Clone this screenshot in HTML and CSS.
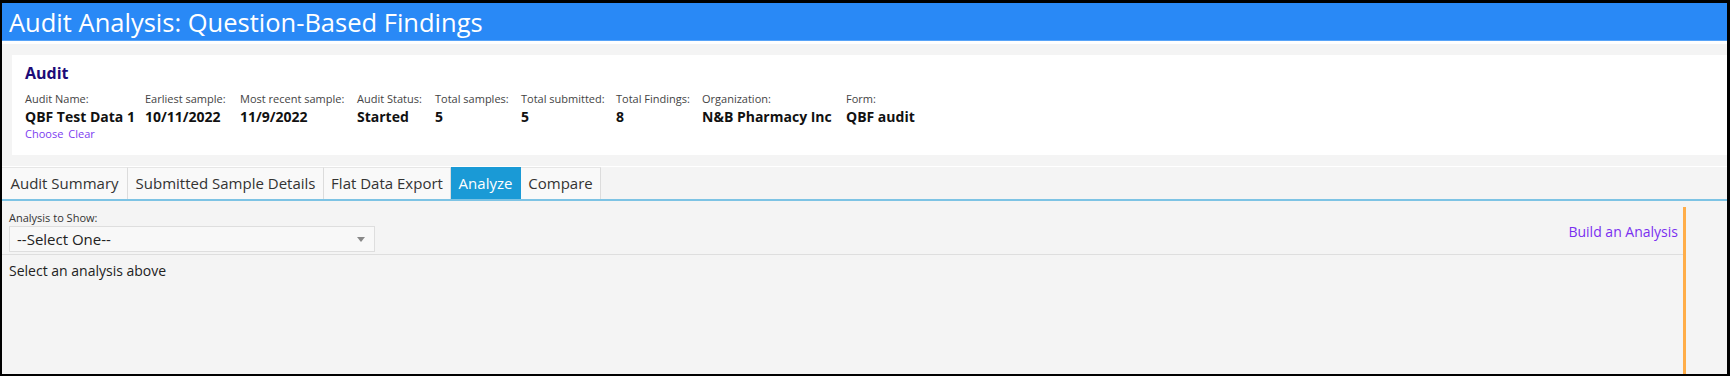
FILE: index.html
```html
<!DOCTYPE html>
<html lang="en">
<head>
<meta charset="utf-8">
<title>Audit Analysis: Question-Based Findings</title>
<link rel="stylesheet" href="styles.css">
</head>
<body>
<div class="frame">
  <header class="titlebar"><h1>Audit Analysis: Question-Based Findings</h1></header>
  <section class="audit-panel">
    <div class="audit-card">
      <h2>Audit</h2>
      <div class="fields">
        <div class="field">
          <span class="label">Audit Name:</span>
          <span class="value">QBF Test Data 1</span>
          <span class="links"><a href="#">Choose</a><a href="#">Clear</a></span>
        </div>
        <div class="field"><span class="label">Earliest sample:</span><span class="value">10/11/2022</span></div>
        <div class="field"><span class="label">Most recent sample:</span><span class="value">11/9/2022</span></div>
        <div class="field"><span class="label">Audit Status:</span><span class="value">Started</span></div>
        <div class="field"><span class="label">Total samples:</span><span class="value">5</span></div>
        <div class="field"><span class="label">Total submitted:</span><span class="value">5</span></div>
        <div class="field"><span class="label">Total Findings:</span><span class="value">8</span></div>
        <div class="field"><span class="label">Organization:</span><span class="value">N&amp;B Pharmacy Inc</span></div>
        <div class="field"><span class="label">Form:</span><span class="value">QBF audit</span></div>
      </div>
    </div>
  </section>
  <nav class="tabs">
    <a class="tab t1" href="#">Audit Summary</a>
    <a class="tab t2" href="#">Submitted Sample Details</a>
    <a class="tab t3" href="#">Flat Data Export</a>
    <a class="tab t4 active" href="#">Analyze</a>
    <a class="tab t5" href="#">Compare</a>
  </nav>
  <main class="content">
    <div class="analysis">
      <div class="toolbar">
        <div class="picker">
          <label class="picker-label">Analysis to Show:</label>
          <div class="select"><span>--Select One--</span><span class="arrow"></span></div>
        </div>
        <a class="build" href="#">Build an Analysis</a>
      </div>
      <p class="hint">Select an analysis above</p>
    </div>
  </main>
</div>
</body>
</html>
```

FILE: styles.css
```css
html {
  background: #000;
}
body {
  margin: 3px 3px 2px 2px;
  font-family: "Open Sans", "Noto Sans", sans-serif;
  color: #222;
}
a { text-decoration: none; }

.frame {
  height: 371px;
  background: #f4f4f4;
  display: flex;
  flex-direction: column;
  overflow: hidden;
}

.titlebar {
  height: 37px;
  background: #2989f6;
  border-bottom: 1px solid #57a3f8;
  padding-left: 7px;
  display: flex;
  align-items: center;
  flex-shrink: 0;
}
.titlebar h1 {
  margin: 0;
  font-weight: 400;
  font-size: 25.5px;
  color: #fff;
  letter-spacing: 0;
}

.audit-panel {
  border-top: 3px solid #fff;
  border-bottom: 1px solid #fff;
  padding: 11px 0 11px 10px;
  flex-shrink: 0;
}
.audit-card {
  background: #fff;
  height: 100px;
  box-sizing: border-box;
  padding: 7px 13px;
}
.audit-card h2 {
  margin: 0;
  font-size: 16px;
  line-height: 22px;
  font-weight: 700;
  color: #1d0b78;
}
.fields {
  display: grid;
  grid-template-columns: 120px 95px 117px 78px 86px 95px 86px 144px auto;
  margin-top: 7px;
}
.label {
  display: block;
  font-size: 11px;
  line-height: 16px;
  color: #444;
}
.value {
  display: block;
  font-size: 14px;
  line-height: 19px;
  font-weight: 700;
  color: #111;
  white-space: nowrap;
}
.links {
  display: block;
  font-size: 11px;
  line-height: 16px;
}
.links a {
  color: #7b3cf0;
  margin-right: 5px;
}

.tabs {
  display: flex;
  height: 32px;
  border-bottom: 2px solid #7dc3e4;
  flex-shrink: 0;
}
.tab {
  box-sizing: border-box;
  font-size: 15px;
  line-height: 31px;
  color: #333;
  background: #f9f9f9;
  border-top: 1px solid #e6e6e6;
  border-right: 1px solid #dcdcdc;
  text-align: center;
}
.t1 { width: 126px; }
.t2 { width: 196px; }
.t3 { width: 127px; }
.t4 { width: 70px; }
.t5 { width: 80px; }
.tab.active {
  background: #1a9ad6;
  color: #fff;
  border-top-color: #1a9ad6;
  border-right-color: #1a9ad6;
}

.content {
  flex: 1;
  display: flex;
  padding: 6px 41px 0 0;
}
.analysis {
  flex: 1;
  border-right: 3px solid #ffad48;
}
.toolbar {
  display: flex;
  justify-content: space-between;
  align-items: flex-start;
  padding: 3px 5px 2px 7px;
  border-bottom: 1px solid #dedede;
}
.picker-label {
  display: block;
  font-size: 11px;
  line-height: 16px;
  color: #333;
}
.select {
  box-sizing: border-box;
  width: 366px;
  height: 26px;
  border: 1px solid #dedede;
  background: #f8f8f8;
  display: flex;
  align-items: center;
  justify-content: space-between;
  padding: 0 9px 0 7px;
  font-size: 15px;
  color: #222;
}
.arrow {
  width: 0;
  height: 0;
  border-left: 4px solid transparent;
  border-right: 4px solid transparent;
  border-top: 5px solid #888;
}
.build {
  margin-top: 12px;
  font-size: 14px;
  line-height: 20px;
  color: #7a2ff0;
}
.hint {
  margin: 6px 0 0 7px;
  font-size: 14px;
  line-height: 20px;
  color: #222;
}
```
